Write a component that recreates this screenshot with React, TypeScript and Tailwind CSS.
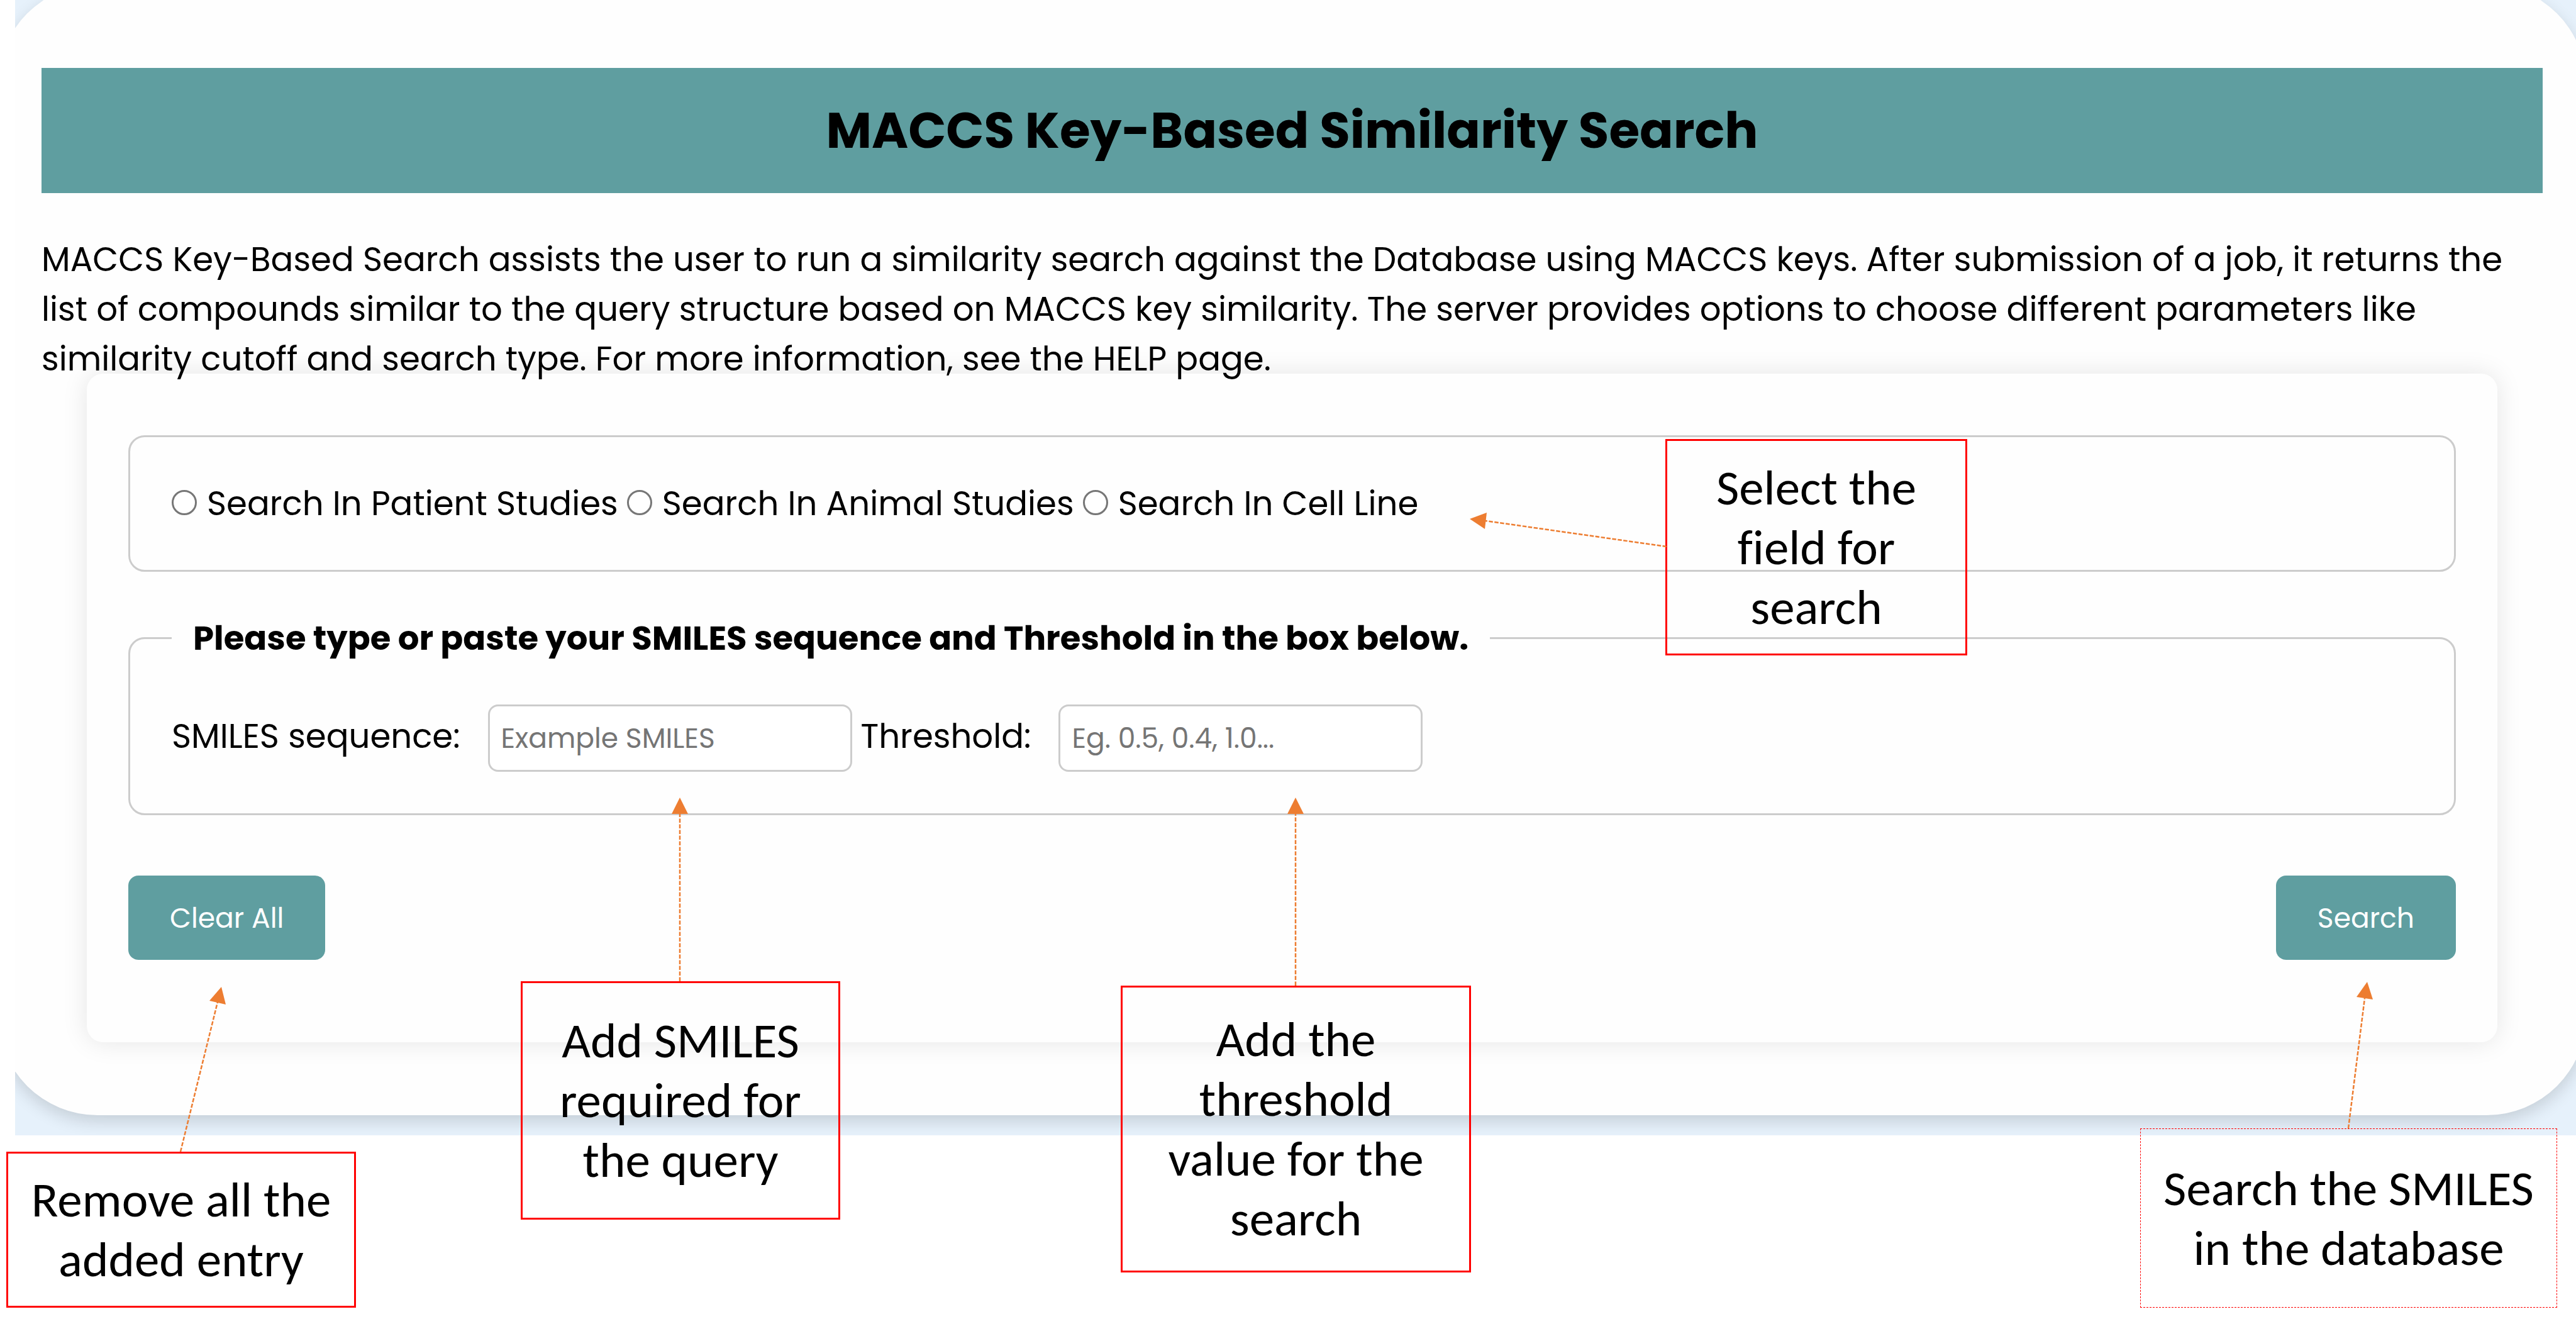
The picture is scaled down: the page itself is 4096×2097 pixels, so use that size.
import React from "react";

const ARROW = "#ed7d31";

function RadioOption({ id, label }: { id: string; label: string }) {
  return (
    <div className="flex items-baseline gap-4">
      <input
        id={id}
        type="radio"
        name="study-type"
        className="mb-1 size-10 appearance-none rounded-full border-3 border-[#767676] bg-white checked:border-[12px] checked:border-[#5f9ea0]"
      />
      <label htmlFor={id}>{label}</label>
    </div>
  );
}

function TextField({ id, label, placeholder }: { id: string; label: string; placeholder: string }) {
  return (
    <div className="flex items-baseline gap-11">
      <label htmlFor={id}>{label}</label>
      <input
        id={id}
        type="text"
        placeholder={placeholder}
        className="h-[107px] w-[579px] rounded-2xl border-3 border-[#ccc] bg-white px-[18px] text-[44px] placeholder:text-[#757575]"
      />
    </div>
  );
}

function Callout({ className, children }: { className: string; children: React.ReactNode }) {
  return (
    <div
      className={
        "absolute flex items-center justify-center text-center font-['Calibri','Carlito','Lato',sans-serif] text-[79px] leading-[95px] text-black [font-variant-ligatures:none] " +
        className
      }
    >
      <p>{children}</p>
    </div>
  );
}

function Arrow({ line, head }: { line: [number, number, number, number]; head: string }) {
  const [x1, y1, x2, y2] = line;
  return (
    <g>
      <line x1={x1} y1={y1} x2={x2} y2={y2} stroke={ARROW} strokeWidth="2.5" strokeDasharray="6.5 2.5" />
      <polygon points={head} fill={ARROW} />
    </g>
  );
}

export default function App() {
  return (
    <div className="relative min-h-screen overflow-hidden bg-white font-['Poppins','Inter',sans-serif] text-[53px] leading-[79px] text-black">
      <div className="ml-6 overflow-hidden bg-[#e6f1fb] pb-8">
        <main className="-mx-[27px] -mt-[25px] mr-[-16px] rounded-[158px] bg-[#fefefe] px-[69px] pt-[133px] pb-[116px] shadow-[0_10px_26px_rgba(0,0,0,0.14)]">
          <h1 className="flex h-[199px] items-center justify-center bg-[#5f9ea0] text-[79px] font-bold">
            MACCS Key-Based Similarity Search
          </h1>
          <p className="relative z-10 mt-[66px]">
            MACCS Key-Based Search assists the user to run a similarity search against the Database using MACCS keys.
            After submission of a job, it returns the
            <br />
            list of compounds similar to the query structure based on MACCS key similarity. The server provides options to
            choose different parameters like
            <br />
            similarity cutoff and search type. For more information, see the HELP page.
          </p>

          <form
            className="mx-[72px] -mt-[16px] flex flex-col rounded-[26px] bg-[#fefefe] px-[66px] pt-[98px] pb-[131px] shadow-[0_0_40px_rgba(0,0,0,0.1)]"
            onSubmit={(e) => e.preventDefault()}
          >
            <fieldset className="rounded-[26px] border-3 border-[#ccc] px-[66px] py-[66px]">
              <div className="flex flex-wrap gap-3.5">
                <RadioOption id="patient" label="Search In Patient Studies" />
                <RadioOption id="animal" label="Search In Animal Studies" />
                <RadioOption id="cell" label="Search In Cell Line" />
              </div>
            </fieldset>

            <fieldset className="mt-[66px] rounded-[26px] border-3 border-[#ccc] px-[66px] pb-[66px]">
              <legend className="px-[34px] font-bold">
                Please type or paste your SMILES sequence and Threshold in the box below.
              </legend>
              <div className="mt-[66px] flex items-center gap-3.5">
                <TextField id="smiles" label="SMILES sequence:" placeholder="Example SMILES" />
                <TextField id="threshold" label="Threshold:" placeholder="Eg. 0.5, 0.4, 1.0..." />
              </div>
            </fieldset>

            <div className="mt-24 flex justify-between text-[44px] text-white">
              <button type="reset" className="h-[134px] rounded-2xl bg-[#5f9ea0] px-[66px]">
                Clear All
              </button>
              <button type="submit" className="h-[134px] rounded-2xl bg-[#5f9ea0] px-[66px]">
                Search
              </button>
            </div>
          </form>
        </main>
      </div>

      <Callout className="top-[698px] left-[2648px] h-[344px] w-[480px] border-3 border-[#f00]">
        Select the
        <br />
        field for
        <br />
        search
      </Callout>
      <Callout className="top-[1560px] left-[828px] h-[379px] w-[508px] border-3 border-[#f00]">
        Add SMILES
        <br />
        required for
        <br />
        the query
      </Callout>
      <Callout className="top-[1567px] left-[1782px] h-[456px] w-[557px] border-3 border-[#f00]">
        Add the
        <br />
        threshold
        <br />
        value for the
        <br />
        search
      </Callout>
      <Callout className="top-[1831px] left-[10px] h-[248px] w-[556px] border-3 border-[#f00]">
        Remove all the
        <br />
        added entry
      </Callout>
      <Callout className="top-[1794px] left-[3403px] h-[285px] w-[663px] border border-dashed border-[#f00]">
        Search the SMILES
        <br />
        in the database
      </Callout>

      <svg
        className="pointer-events-none absolute top-0 left-0 h-[2097px] w-[4096px]"
        viewBox="0 0 4096 2097"
        aria-hidden="true"
      >
        <Arrow line={[2650, 869, 2362, 828]} head="2337,825 2364,815 2361,841" />
        <Arrow line={[1081, 1560, 1081, 1292]} head="1081,1268 1094,1294 1068,1294" />
        <Arrow line={[2060, 1567, 2060, 1292]} head="2060,1268 2073,1294 2047,1294" />
        <Arrow line={[287, 1831, 346, 1593]} head="352,1569 333,1591 359,1597" />
        <Arrow line={[3734, 1794, 3760, 1587]} head="3764,1561 3747,1585 3773,1589" />
      </svg>
    </div>
  );
}
